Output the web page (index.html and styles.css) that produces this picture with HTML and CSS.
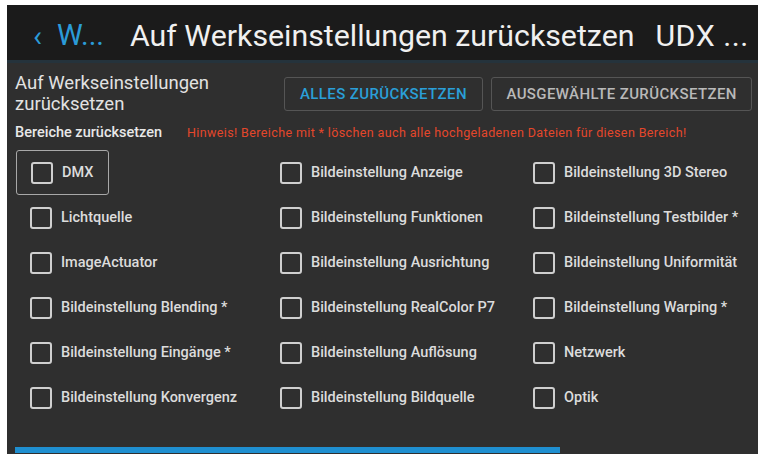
FILE: index.html
```html
<!DOCTYPE html>
<html lang="de">
<head>
  <meta charset="UTF-8" />
  <title>Auf Werkseinstellungen zurücksetzen</title>
  <link rel="stylesheet" href="styles.css">
</head>
<body>
  <div class="screen">
    <div class="topbar">
      <span class="back">&#8249;</span>
      <span class="crumb">W...</span>
      <span class="title">Auf Werkseinstellungen zurücksetzen</span>
      <span class="device">UDX ...</span>
    </div>

    <div class="content">
      <div class="head-row">
        <h1 class="section-title">Auf Werkseinstellungen<br>zurücksetzen</h1>
        <button class="btn btn-primary">ALLES ZURÜCKSETZEN</button>
        <button class="btn btn-selected">AUSGEWÄHLTE ZURÜCKSETZEN</button>
      </div>

      <div class="sub-row">
        <span class="sub-title">Bereiche zurücksetzen</span>
        <span class="hint">Hinweis! Bereiche mit * löschen auch alle hochgeladenen Dateien für diesen Bereich!</span>
      </div>

      <div class="options">
        <!-- Row 1 -->
        <label class="option focused"><span class="box"></span>DMX</label>
        <label class="option"><span class="box"></span>Bildeinstellung Anzeige</label>
        <label class="option"><span class="box"></span>Bildeinstellung 3D Stereo</label>

        <!-- Row 2 -->
        <label class="option"><span class="box"></span>Lichtquelle</label>
        <label class="option"><span class="box"></span>Bildeinstellung Funktionen</label>
        <label class="option"><span class="box"></span>Bildeinstellung Testbilder *</label>

        <!-- Row 3 -->
        <label class="option"><span class="box"></span>ImageActuator</label>
        <label class="option"><span class="box"></span>Bildeinstellung Ausrichtung</label>
        <label class="option"><span class="box"></span>Bildeinstellung Uniformität</label>

        <!-- Row 4 -->
        <label class="option"><span class="box"></span>Bildeinstellung Blending *</label>
        <label class="option"><span class="box"></span>Bildeinstellung RealColor P7</label>
        <label class="option"><span class="box"></span>Bildeinstellung Warping *</label>

        <!-- Row 5 -->
        <label class="option"><span class="box"></span>Bildeinstellung Eingänge *</label>
        <label class="option"><span class="box"></span>Bildeinstellung Auflösung</label>
        <label class="option"><span class="box"></span>Netzwerk</label>

        <!-- Row 6 -->
        <label class="option"><span class="box"></span>Bildeinstellung Konvergenz</label>
        <label class="option"><span class="box"></span>Bildeinstellung Bildquelle</label>
        <label class="option"><span class="box"></span>Optik</label>
      </div>
    </div>

    <div class="progress"><div class="progress-fill"></div></div>
  </div>
</body>
</html>
```

FILE: styles.css
```css
* {
  box-sizing: border-box;
  font-family: Roboto, 'Liberation Sans', sans-serif;
}

body {
  margin: 0;
  background: #fff;
  overflow: hidden;
}

.screen {
  margin: 5px 4px 0 7px;
  height: 449px;
  background: #2f2f2f;
  display: flex;
  flex-direction: column;
}

.topbar {
  height: 58px;
  background: #1b1b1b;
  border-bottom: 3px solid #25333c;
  display: flex;
  align-items: center;
  padding: 5px 0 0 26px;
  white-space: nowrap;
}

.back {
  color: #2b9bd8;
  font-size: 30px;
  margin-right: 15px;
}

.crumb {
  color: #2b9bd8;
  font-size: 29px;
  margin-right: 26px;
}

.title {
  color: #f0f0f0;
  font-size: 30.3px;
  margin-right: 21px;
}

.device {
  color: #f0f0f0;
  font-size: 30.3px;
  letter-spacing: 0.5px;
}

.content {
  flex: 1;
  padding: 10px 6px 0 8px;
}

.head-row {
  display: flex;
  align-items: center;
  gap: 8px;
}

.section-title {
  margin: 0;
  width: 261px;
  color: #e2e2e2;
  font-size: 18.5px;
  font-weight: 400;
  line-height: 21px;
}

.btn {
  height: 34px;
  padding: 0 10px;
  background: transparent;
  border: 1.5px solid #555;
  border-radius: 3px;
  color: #b9b9b9;
  font-size: 15px;
  font-weight: 500;
  letter-spacing: 0.4px;
}

.btn-primary {
  width: 200px;
  color: #2a9fd8;
}

.btn-selected {
  width: 261px;
}

.sub-row {
  display: flex;
  align-items: baseline;
  margin-top: 9px;
  white-space: nowrap;
}

.sub-title {
  color: #e8e8e8;
  font-size: 14.5px;
  font-weight: 500;
  width: 172px;
}

.hint {
  color: #e4472b;
  font-size: 12.5px;
  letter-spacing: 0.38px;
}

.options {
  display: grid;
  grid-template-columns: 250px 253px 1fr;
  grid-auto-rows: 45px;
  margin-top: 9px;
}

.option {
  display: flex;
  align-items: center;
  padding-left: 15px;
  color: #dcdcdc;
  font-size: 14.5px;
  font-weight: 500;
  white-space: nowrap;
}

.option.focused {
  padding-left: 14px;
  margin-left: 1px;
  width: 93px;
  border: 1.5px solid #a8a8a8;
  border-radius: 3px;
}

.box {
  width: 22px;
  height: 22px;
  border: 2px solid #cfcfcf;
  border-radius: 3px;
  margin-right: 9px;
  flex-shrink: 0;
}

.progress {
  height: 12px;
  padding: 5px 0 0 8px;
}

.progress-fill {
  width: 545px;
  height: 6px;
  background: #1f8fd0;
}
```
